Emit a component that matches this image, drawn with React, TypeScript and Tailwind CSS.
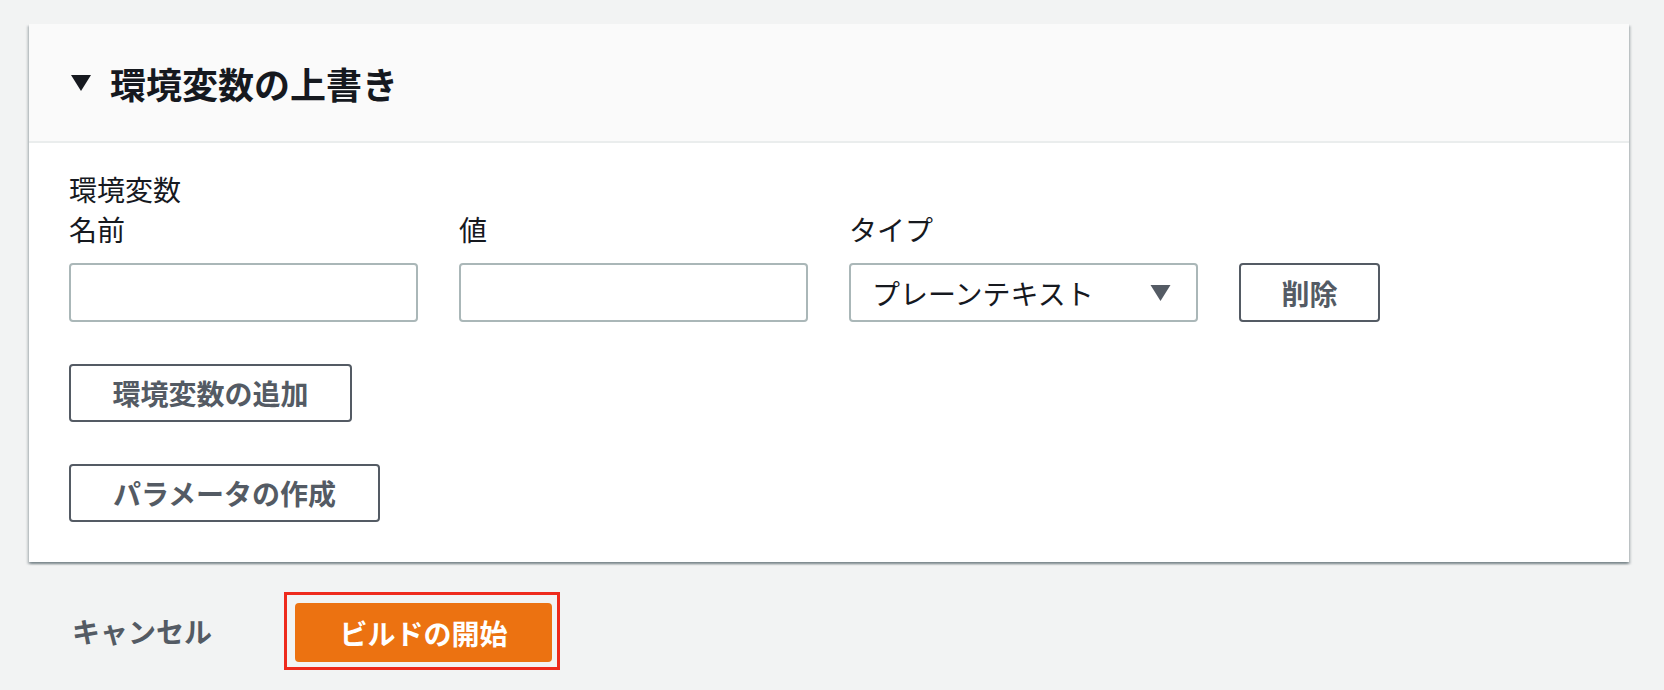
const fields = [
  { label: "名前", kind: "text" },
  { label: "値", kind: "text" },
  { label: "タイプ", kind: "select" },
];

function Caret({ className }: { className: string }) {
  return (
    <svg viewBox="0 0 20 16" className={className} aria-hidden>
      <polygon points="0,0 20,0 10,16" fill="currentColor" />
    </svg>
  );
}

export default function App() {
  return (
    <div className="min-h-screen bg-[#f2f3f3] pt-[24px] font-['Noto_Sans_CJK_JP','Noto_Sans',sans-serif] text-[#16191f]">
      <section className="ml-[29px] w-[1600px] bg-white shadow-[0_2px_2px_0_rgba(0,28,36,0.3),2px_2px_2px_0_rgba(0,28,36,0.15),-2px_2px_2px_0_rgba(0,28,36,0.15)]">
        <div className="flex h-[119px] items-center gap-[19px] border-b-2 border-[#eaeded] bg-[#fafafa] pl-[42px]">
          <Caret className="h-[16px] w-[20px] text-[#16191f]" />
          <h2 className="text-[36px] font-bold leading-[44px]">環境変数の上書き</h2>
        </div>

        <div className="px-[40px] pb-[40px] pt-[26px]">
          <p className="text-[28px] leading-[40px]">環境変数</p>
          <div className="flex items-end gap-[41px]">
            {fields.map((f) => (
              <div key={f.label} className="w-[349px]">
                <label className="block text-[28px] leading-[40px]">{f.label}</label>
                {f.kind === "text" ? (
                  <input className="mt-[14px] block h-[59px] w-full rounded-[4px] border-2 border-[#aab7b8] bg-white px-[20px] text-[28px] outline-none" />
                ) : (
                  <div className="mt-[14px] flex h-[59px] w-full items-center justify-between rounded-[4px] border-2 border-[#aab7b8] bg-white pl-[21px] pr-[25px]">
                    <span className="text-[28px] leading-[40px]">プレーンテキスト</span>
                    <Caret className="h-[16px] w-[21px] text-[#545b64]" />
                  </div>
                )}
              </div>
            ))}
            <button className="h-[59px] w-[141px] rounded-[4px] border-2 border-[#545b64] bg-white text-[28px] font-bold text-[#545b64]">
              削除
            </button>
          </div>

          <button className="mt-[42px] block h-[58px] w-[283px] rounded-[4px] border-2 border-[#545b64] bg-white text-[28px] font-bold text-[#545b64]">
            環境変数の追加
          </button>
          <button className="mt-[42px] block h-[58px] w-[311px] rounded-[4px] border-2 border-[#545b64] bg-white text-[28px] font-bold text-[#545b64]">
            パラメータの作成
          </button>
        </div>
      </section>

      <div className="ml-[29px] mt-[30px] flex items-center pl-[43px]">
        <a className="w-[140px] text-[28px] font-bold leading-[40px] text-[#545b64]">キャンセル</a>
        <div className="ml-[72px] border-[3px] border-[#ee2a1c] pb-[5px] pl-[8px] pr-[5px] pt-[8px]">
          <button className="h-[59px] w-[257px] rounded-[4px] bg-[#ec7211] text-[28px] font-bold text-white">
            ビルドの開始
          </button>
        </div>
      </div>
    </div>
  );
}
